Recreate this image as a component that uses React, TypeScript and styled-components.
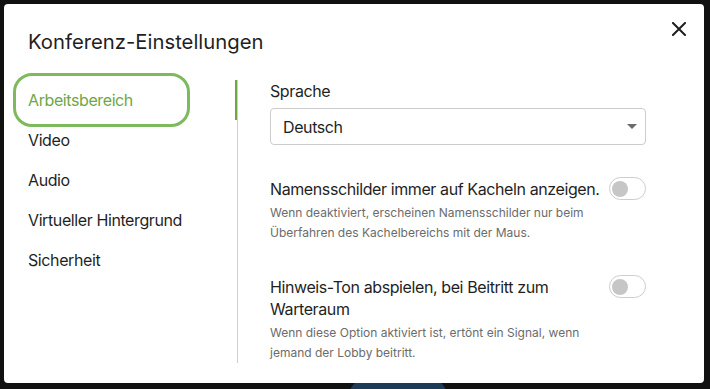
import React, { useState } from "react";
import styled, { createGlobalStyle } from "styled-components";

const Global = createGlobalStyle`
  html, body { margin: 0; padding: 0; background: #111111; }
  body { font-family: "Inter", "Noto Sans", sans-serif; -webkit-font-smoothing: antialiased; }
  * { box-sizing: border-box; }
`;

const Backdrop = styled.div`
  position: relative;
  width: 710px;
  height: 389px;
  padding: 4px 6px 6px 4px;
  background: #111111;
  overflow: hidden;
`;

const Avatar = styled.div`
  position: absolute;
  left: 348px;
  top: 377px;
  width: 100px;
  height: 60px;
  border-radius: 22px;
  background: #1d3a57;
`;

const Modal = styled.div`
  position: relative;
  z-index: 1;
  height: 100%;
  background: #ffffff;
  border-radius: 4px;
  display: flex;
  flex-direction: column;
`;

const Header = styled.div`
  padding: 24px 24px 0 24px;
`;

const Title = styled.h1`
  margin: 0;
  font-size: 20.3px;
  line-height: 28px;
  font-weight: 400;
  color: #1f1f1f;
  letter-spacing: 0;
`;

const CloseButton = styled.button`
  position: absolute;
  top: 17px;
  right: 17px;
  width: 16px;
  height: 16px;
  padding: 0;
  border: 0;
  background: transparent;
  display: flex;
  align-items: center;
  justify-content: center;
`;

const Body = styled.div`
  flex: 1;
  display: flex;
  padding: 24px 0 21px 0;
`;

const Nav = styled.ul`
  list-style: none;
  margin: 0;
  padding: 0 0 0 16px;
  width: 233px;
  display: flex;
  flex-direction: column;
`;

const NavItem = styled.li<{ $active?: boolean }>`
  width: 163px;
  height: 40px;
  line-height: 40px;
  padding-left: 8px;
  font-size: 16px;
  letter-spacing: -0.4px;
  white-space: nowrap;
  color: ${(p) => (p.$active ? "#6fa743" : "#1f1f1f")};
  border-radius: 12px;
  outline: ${(p) => (p.$active ? "3px solid #7fb95e" : "none")};
  outline-offset: 4px;
  cursor: pointer;
`;

const Divider = styled.div`
  position: relative;
  width: 1px;
  background: #cfcfcf;
  &::before {
    content: "";
    position: absolute;
    left: -2px;
    top: 0;
    width: 2px;
    height: 40px;
    background: #6fa743;
  }
`;

const Content = styled.div`
  width: 376px;
  margin-left: 32px;
  display: flex;
  flex-direction: column;
`;

const FieldLabel = styled.div`
  font-size: 16px;
  line-height: 22px;
  color: #1f1f1f;
  letter-spacing: -0.4px;
`;

const SelectBox = styled.div`
  position: relative;
  margin-top: 6px;
  height: 37px;
  border: 1px solid #cccccc;
  border-radius: 4px;
  padding: 0 12px;
  display: flex;
  align-items: center;
  justify-content: space-between;
  font-size: 16px;
  color: #1f1f1f;
  letter-spacing: -0.4px;
`;

const Caret = styled.span`
  width: 0;
  height: 0;
  border-left: 5px solid transparent;
  border-right: 5px solid transparent;
  border-top: 5px solid #6b6b6b;
  margin-right: -4px;
`;

const Setting = styled.div`
  margin-top: 33px;
  display: flex;
  align-items: flex-start;
  gap: 8px;
`;

const SettingText = styled.div`
  flex: 1;
  display: flex;
  flex-direction: column;
`;

const SettingTitle = styled.div`
  font-size: 16px;
  line-height: 22px;
  color: #1f1f1f;
  letter-spacing: -0.4px;
`;

const SettingDesc = styled.div`
  margin-top: 3px;
  font-size: 12px;
  line-height: 20px;
  color: #6b6b6b;
  max-width: 320px;
`;

const Toggle = styled.div<{ $on?: boolean }>`
  flex: none;
  margin-top: -1px;
  width: 37px;
  height: 23px;
  border: 1px solid #cdcdcd;
  border-radius: 12px;
  background: #ffffff;
  padding: 2px;
  display: flex;
  align-items: center;
  &::after {
    content: "";
    width: 16px;
    height: 16px;
    border-radius: 50%;
    background: #c6c6c6;
  }
`;

const navItems = [
  "Arbeitsbereich",
  "Video",
  "Audio",
  "Virtueller Hintergrund",
  "Sicherheit",
];

export default function App() {
  const [active, setActive] = useState(0);
  return (
    <>
      <Global />
      <Backdrop>
        <Avatar />
        <Modal>
          <Header>
            <Title>Konferenz-Einstellungen</Title>
          </Header>
          <CloseButton aria-label="Schließen">
            <svg width="14" height="14" viewBox="0 0 14 14">
              <path d="M1 1 L13 13 M13 1 L1 13" stroke="#1f1f1f" strokeWidth="2" strokeLinecap="square" />
            </svg>
          </CloseButton>
          <Body>
            <Nav>
              {navItems.map((n, i) => (
                <NavItem key={n} $active={i === active} onClick={() => setActive(i)}>
                  {n}
                </NavItem>
              ))}
            </Nav>
            <Divider />
            <Content>
              <FieldLabel>Sprache</FieldLabel>
              <SelectBox>
                <span>Deutsch</span>
                <Caret />
              </SelectBox>
              <Setting>
                <SettingText>
                  <SettingTitle>Namensschilder immer auf Kacheln anzeigen.</SettingTitle>
                  <SettingDesc>
                    Wenn deaktiviert, erscheinen Namensschilder nur beim Überfahren des Kachelbereichs mit der Maus.
                  </SettingDesc>
                </SettingText>
                <Toggle />
              </Setting>
              <Setting>
                <SettingText>
                  <SettingTitle>Hinweis-Ton abspielen, bei Beitritt zum Warteraum</SettingTitle>
                  <SettingDesc>
                    Wenn diese Option aktiviert ist, ertönt ein Signal, wenn jemand der Lobby beitritt.
                  </SettingDesc>
                </SettingText>
                <Toggle />
              </Setting>
            </Content>
          </Body>
        </Modal>
      </Backdrop>
    </>
  );
}
